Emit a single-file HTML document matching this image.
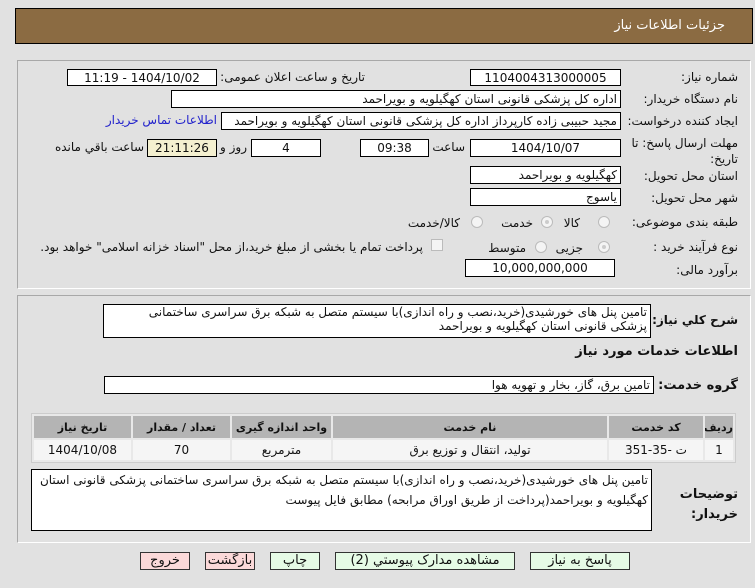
<!DOCTYPE html>
<html><head><meta charset="utf-8"><style>
body{margin:0;width:755px;height:588px;background:#e1e1e1;font-family:Tahoma,"DejaVu Sans","Noto Sans CJK SC",sans-serif;font-size:12px;color:#111;position:relative;overflow:hidden;direction:rtl}
.a{position:absolute}
.hdr{left:15px;top:8px;width:738px;height:36px;background:#8b6b42;border:1px solid #000;box-sizing:border-box;color:#fff;font-size:13px}
.panel{border:1px solid #a8a8a8;border-right-color:#fff;border-bottom-color:#fff;box-sizing:border-box}
.box{background:#fff;border:1px solid #000;box-sizing:border-box;text-align:center;line-height:16px;white-space:nowrap;overflow:hidden}
.l{text-align:right;white-space:nowrap}
.lab{white-space:nowrap}
.b{font-weight:bold}
.rad{width:12px;height:12px;border-radius:50%;border:1px solid #bbb;background:#f4f4f4;box-sizing:border-box}
.rad.on::after{content:"";position:absolute;left:3px;top:3px;width:4px;height:4px;border-radius:50%;background:#ccc}
table{border-collapse:separate;border-spacing:2px;background:#e8e8e8;border:1px solid #ccc;table-layout:fixed}
th{background:#b4b4b4;height:22px;font-weight:bold;font-size:11px;white-space:nowrap;overflow:hidden;padding:0}
td{background:#f5f5f5;height:20px;text-align:center;white-space:nowrap;padding:0}
.btn{border:1px solid #333;box-sizing:border-box;text-align:center;line-height:16px;font-size:13px}
</style></head><body>
<div class="a hdr"><span class="a" style="right:27px;top:9px">جزئیات اطلاعات نیاز</span></div>

<div class="a panel" style="left:17px;top:60px;width:734px;height:229px"></div>
<div class="a panel" style="left:17px;top:295px;width:734px;height:248px"></div>

<span class="a lab" style="right:17px;top:70px">شماره نیاز:</span>
<div class="a box" style="left:470px;top:69px;width:151px;height:17px">1104004313000005</div>
<span class="a lab" style="right:390px;top:70px">تاریخ و ساعت اعلان عمومی:</span>
<div class="a box" style="left:67px;top:69px;width:150px;height:17px">1404/10/02 - 11:19</div>

<span class="a lab" style="right:17px;top:92px">نام دستگاه خریدار:</span>
<div class="a box l" style="left:171px;top:90px;width:450px;height:18px;padding-right:3px">اداره کل پزشکی قانونی استان کهگیلویه و بویراحمد</div>

<span class="a lab" style="right:17px;top:114px">ایجاد کننده درخواست:</span>
<div class="a box l" style="left:221px;top:112px;width:400px;height:18px;padding-right:3px">مجید حبیبی زاده کارپرداز اداره کل پزشکی قانونی استان کهگیلویه و بویراحمد</div>
<span class="a lab" style="right:538px;top:113px;color:#2222cc">اطلاعات تماس خریدار</span>

<span class="a lab" style="right:17px;top:135px;line-height:16px;text-align:right">مهلت ارسال پاسخ: تا<br>تاریخ:</span>
<div class="a box" style="left:470px;top:139px;width:151px;height:18px">1404/10/07</div>
<span class="a lab" style="right:290px;top:140px">ساعت</span>
<div class="a box" style="left:360px;top:139px;width:69px;height:18px">09:38</div>
<div class="a box" style="left:251px;top:139px;width:70px;height:18px">4</div>
<span class="a lab" style="right:508px;top:140px">روز و</span>
<div class="a box" style="left:147px;top:139px;width:70px;height:18px;background:#f4f0d0">21:11:26</div>
<span class="a lab" style="right:611px;top:140px">ساعت باقي مانده</span>

<span class="a lab" style="right:17px;top:169px">استان محل تحویل:</span>
<div class="a box l" style="left:470px;top:166px;width:151px;height:18px;padding-right:3px">کهگیلویه و بویراحمد</div>
<span class="a lab" style="right:17px;top:191px">شهر محل تحویل:</span>
<div class="a box l" style="left:470px;top:188px;width:151px;height:18px;padding-right:3px">یاسوج</div>

<span class="a lab" style="right:17px;top:215px">طبقه بندی موضوعی:</span>
<div class="a rad" style="left:598px;top:216px"></div><span class="a lab" style="right:175px;top:216px">کالا</span>
<div class="a rad on" style="left:541px;top:216px"></div><span class="a lab" style="right:222px;top:216px">خدمت</span>
<div class="a rad" style="left:471px;top:216px"></div><span class="a lab" style="right:295px;top:216px">کالا/خدمت</span>

<span class="a lab" style="right:17px;top:240px">نوع فرآیند خرید :</span>
<div class="a rad on" style="left:598px;top:241px"></div><span class="a lab" style="right:172px;top:241px">جزیی</span>
<div class="a rad" style="left:535px;top:241px"></div><span class="a lab" style="right:229px;top:241px">متوسط</span>
<div class="a" style="left:431px;top:239px;width:12px;height:12px;border:1px solid #bbb;background:#f4f4f4;box-sizing:border-box"></div>
<span class="a lab" style="right:332px;top:240px">پرداخت تمام یا بخشی از مبلغ خرید،از محل "اسناد خزانه اسلامی" خواهد بود.</span>

<span class="a lab" style="right:17px;top:263px">برآورد مالی:</span>
<div class="a box" style="left:465px;top:259px;width:150px;height:18px">10,000,000,000</div>

<span class="a lab b" style="right:17px;top:313px;font-size:12px">شرح کلي نیاز:</span>
<div class="a box l" style="left:103px;top:304px;width:548px;height:34px;padding-right:3px;padding-left:38px;line-height:14px;white-space:normal">تامین پنل های خورشیدی(خرید،نصب و راه اندازی)با سیستم متصل به شبکه برق سراسری ساختمانی پزشکی قانونی استان کهگیلویه و بویراحمد</div>
<span class="a lab b" style="right:17px;top:344px;font-size:13px">اطلاعات خدمات مورد نیاز</span>

<span class="a lab b" style="right:17px;top:378px;font-size:13px">گروه خدمت:</span>
<div class="a box l" style="left:104px;top:376px;width:550px;height:18px;padding-right:3px">تامین برق، گاز، بخار و تهویه هوا</div>

<table class="a" style="left:31px;top:413px;width:705px">
<tr><th style="width:28px">ردیف</th><th style="width:94px">کد خدمت</th><th>نام خدمت</th><th style="width:99px">واحد اندازه گیری</th><th style="width:97px">تعداد / مقدار</th><th style="width:97px">تاریخ نیاز</th></tr>
<tr><td>1</td><td>ت -35-351</td><td>تولید، انتقال و توزیع برق</td><td>مترمربع</td><td>70</td><td>1404/10/08</td></tr>
</table>

<span class="a lab b" style="right:17px;top:485px;font-size:13px;line-height:20px;text-align:right">توضیحات<br>خریدار:</span>
<div class="a box l" style="left:31px;top:469px;width:621px;height:62px;padding-right:3px;line-height:20px;white-space:normal">تامین پنل های خورشیدی(خرید،نصب و راه اندازی)با سیستم متصل به شبکه برق سراسری ساختمانی پزشکی قانونی استان کهگیلویه و بویراحمد(پرداخت از طریق اوراق مرابحه) مطابق فایل پیوست</div>

<div class="a btn" style="left:530px;top:552px;width:100px;height:18px;background:#e6fbe6">پاسخ به نیاز</div>
<div class="a btn" style="left:335px;top:552px;width:180px;height:18px;background:#e6fbe6">مشاهده مدارک پیوستي (2)</div>
<div class="a btn" style="left:270px;top:552px;width:50px;height:18px;background:#e6fbe6">چاپ</div>
<div class="a btn" style="left:205px;top:552px;width:50px;height:18px;background:#fbd9d9">بازگشت</div>
<div class="a btn" style="left:140px;top:552px;width:50px;height:18px;background:#fbd9d9">خروج</div>
</body></html>
